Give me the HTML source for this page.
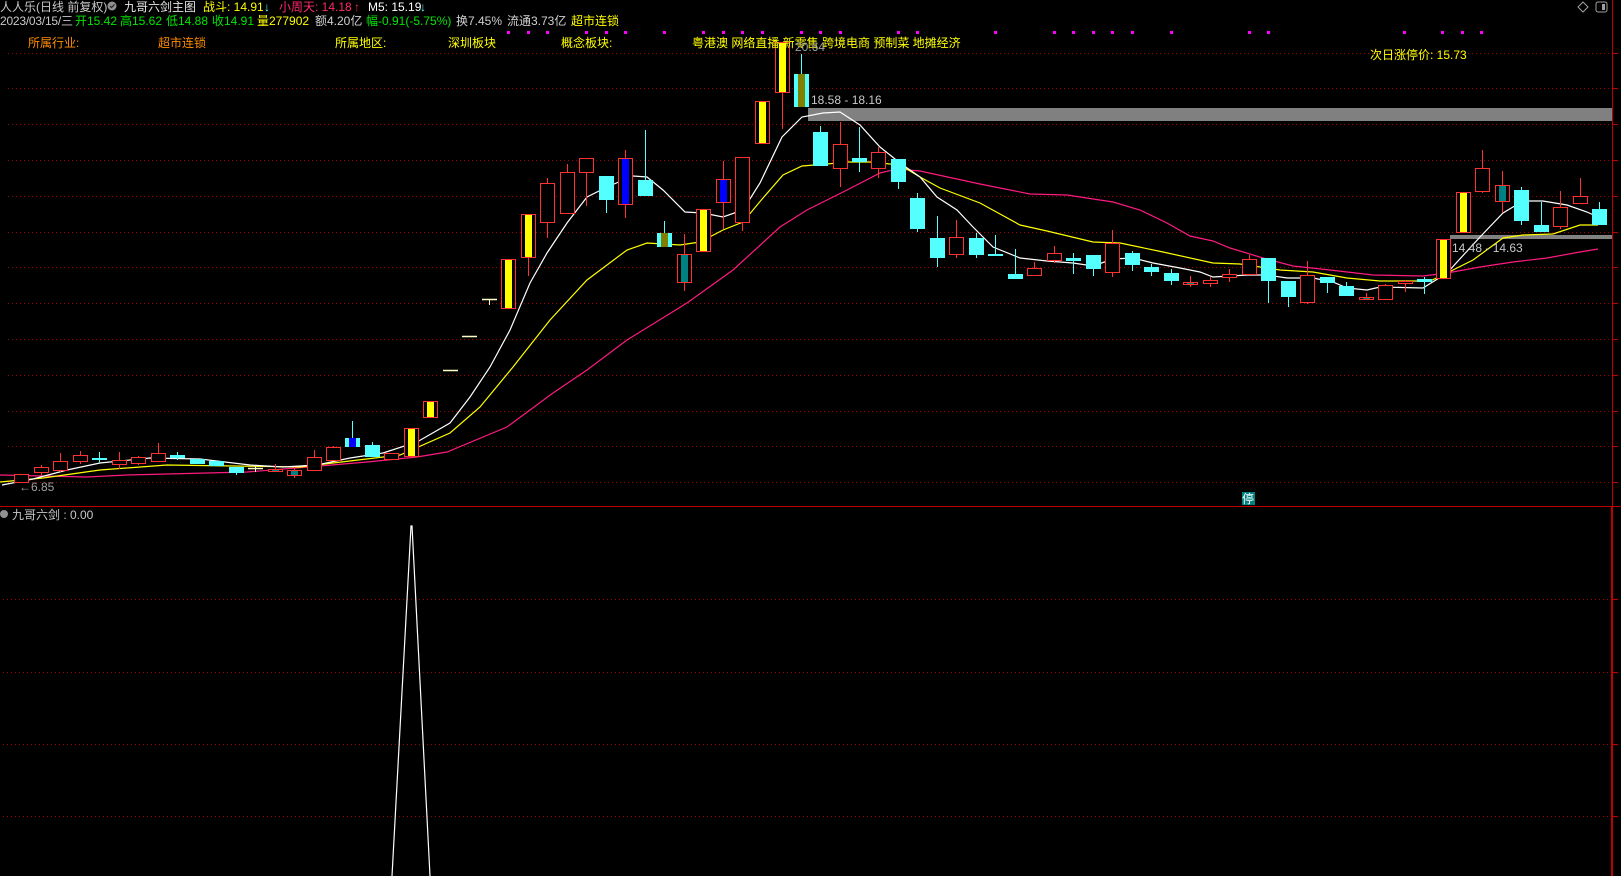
<!DOCTYPE html>
<html><head><meta charset="utf-8">
<style>
html,body{margin:0;padding:0;background:#000;width:1621px;height:876px;overflow:hidden}
svg{display:block}
text{font-family:"Liberation Sans","Noto Sans CJK SC",sans-serif;font-size:12px}
</style></head>
<body>
<svg id="s" width="1621" height="876" xmlns="http://www.w3.org/2000/svg">
<rect width="1621" height="876" fill="#000"/>
<g id="grid"></g>
<text x="0" y="11" fill="#c8c8c8">人人乐(日线 前复权)</text>
<circle cx="112" cy="6" r="4.5" fill="#909090"/>
<path d="M110 6 l1.5 1.5 l3-3" stroke="#222" stroke-width="1.2" fill="none"/>
<text x="124" y="11" fill="#e6e6e6">九哥六剑主图</text>
<text x="203" y="11" fill="#ffff00">战斗: 14.91</text>
<text x="264" y="11" fill="#54ffff">↓</text>
<text x="279" y="11" fill="#ff2a6a">小周天: 14.18</text>
<text x="354" y="11" fill="#ff3232">↑</text>
<text x="368" y="11" fill="#ffffff">M5: 15.19</text>
<text x="420" y="11" fill="#54ffff">↓</text>
<text x="0" y="25" fill="#c8c8c8" textLength="73">2023/03/15/三</text>
<text x="75" y="25" fill="#00e600">开15.42</text>
<text x="120" y="25" fill="#00e600">高15.62</text>
<text x="166" y="25" fill="#00e600">低14.88</text>
<text x="212" y="25" fill="#00e600">收14.91</text>
<text x="257" y="25" fill="#ffff00">量277902</text>
<text x="315" y="25" fill="#d0d0d0">额4.20亿</text>
<text x="366" y="25" fill="#00e600">幅-0.91(-5.75%)</text>
<text x="456" y="25" fill="#d0d0d0">换7.45%</text>
<text x="507" y="25" fill="#d0d0d0">流通3.73亿</text>
<text x="571" y="25" fill="#ffff00">超市连锁</text>
<g id="dots"></g>
<text x="28" y="47" fill="#ff8c00">所属行业:</text>
<text x="158" y="47" fill="#ff8c00">超市连锁</text>
<text x="335" y="47" fill="#ffff00">所属地区:</text>
<text x="448" y="47" fill="#ffff00">深圳板块</text>
<text x="561" y="47" fill="#ffff00">概念板块:</text>
<text x="1370" y="59" fill="#ffff00">次日涨停价: 15.73</text>
<path d="M1583 2 l5 5 l-5 5 l-5 -5 z" stroke="#a0a0a0" fill="none"/>
<rect x="1596" y="2" width="11" height="10" rx="2" stroke="#a0a0a0" fill="none"/>
<rect x="1602" y="4" width="3" height="6" fill="#a0a0a0"/>
<rect x="808" y="108" width="804" height="13" fill="#808080"/>
<rect x="1450" y="235" width="162" height="4" fill="#808080"/>
<g id="ma"></g>
<g id="cand"></g>
<text x="692" y="47" fill="#ffff00">粤港澳 网络直播 新零售 跨境电商 预制菜 地摊经济</text>
<text x="795" y="51" fill="#a0a0a0">20.64</text>
<text x="811" y="104" fill="#c8c8c8">18.58 - 18.16</text>
<text x="1452" y="252" fill="#c8c8c8">14.48 - 14.63</text>
<text x="19" y="491" fill="#a0a0a0">←6.85</text>
<rect x="1242" y="492" width="13" height="13" fill="#008080"/>
<text x="1242" y="503" fill="#fff" style="font-size:12px">停</text>
<line x1="0" y1="506.5" x2="1621" y2="506.5" stroke="#c00000" stroke-width="1"/>
<line x1="1612.5" y1="0" x2="1612.5" y2="506" stroke="#c00000"/>
<line x1="1612" y1="506" x2="1612" y2="876" stroke="#c00000" stroke-width="2"/>
<circle cx="4" cy="514" r="4" fill="#909090"/>
<text x="12" y="519" fill="#c8c8c8">九哥六剑 : 0.00</text>
<polyline points="392,876 411,526 412,526 430,876" stroke="#fff" stroke-width="1.2" fill="none"/>
</svg>
<script>
var NS="http://www.w3.org/2000/svg";
function el(p,t,a){var e=document.createElementNS(NS,t);for(var k in a)e.setAttribute(k,a[k]);p.appendChild(e);return e;}
var g=document.getElementById('grid');
for(var i=0;i<13;i++){var y=Math.round(52.5+i*35.8)+0.5;el(g,'line',{x1:8,y1:y,x2:1610,y2:y,stroke:'#a00000','stroke-dasharray':'1 3'});el(g,'line',{x1:1612,y1:y,x2:1618,y2:y,stroke:'#c00000'});}
[599,672,744,816].forEach(function(y){y+=0.5;el(g,'line',{x1:3,y1:y,x2:1610,y2:y,stroke:'#a00000','stroke-dasharray':'1 3'});el(g,'line',{x1:1612,y1:y,x2:1618,y2:y,stroke:'#c00000'});});
var d=document.getElementById('dots');
[508,528,547,586,606,625,664,703,723,742,762,801,820,840,898,917,995,1054,1073,1093,1112,1132,1171,1249,1268,1404,1442,1462,1481].forEach(function(x){el(d,'rect',{x:x-1,y:31,width:3,height:3,fill:'#ff00ff'});});
var m=document.getElementById('ma');
function pl(pts,c){el(m,'polyline',{points:pts,fill:'none',stroke:c,'stroke-width':1.2});}
pl("0,475 87,477 127,475 207,473 247,472 320,466 367,462 417,457 447,452 507,427 553,393 587,370 627,340 687,303 733,270 780,227 807,210 847,190 880,173 897,169 920,171 980,184 1030,194 1067,195 1113,202 1140,210 1167,223 1190,236 1213,241 1230,248 1263,258 1293,266 1330,270 1373,275 1423,276 1447,273 1480,267 1513,262 1547,258 1580,252 1598,249","#ff1a80");
pl("0,482 43,478 100,470 167,465 233,466 300,467 333,463 400,455 450,433 480,407 513,367 550,320 587,280 627,250 647,243 680,245 700,242 723,230 743,222 763,198 783,175 802,166 827,164 847,162 870,162 900,165 920,177 940,188 980,203 1020,225 1047,231 1093,242 1120,243 1163,252 1213,263 1240,264 1280,270 1313,272 1347,278 1380,281 1430,281 1447,273 1473,260 1503,238 1523,235 1553,234 1580,225 1598,225","#ffff00");
pl("2,485 33,479 67,470 100,463 150,458 200,459 250,465 283,467 317,465 350,458 383,453 417,442 450,423 470,397 490,367 510,330 530,283 547,253 567,223 587,197 607,187 633,176 647,177 663,190 685,212 703,213 723,217 743,210 760,183 782,137 802,117 823,113 840,112 860,125 880,147 900,163 920,177 937,197 957,210 973,227 993,247 1020,258 1047,261 1073,263 1093,266 1113,259 1133,258 1153,263 1180,268 1200,272 1213,277 1247,275 1267,275 1287,278 1313,278 1333,282 1347,288 1367,290 1380,287 1423,288 1447,273 1480,237 1503,213 1523,201 1543,201 1567,205 1587,212 1598,217","#ffffff");
var C=[[21,'R',474,482],[41,'R',467,472,465,476],[60,'R',461,470,453,472],[80,'R',455,461,451,464],[99,'C',458,460,452,463],[119,'R',460,464,452,469],[138,'R',457,463,456,465],[158,'R',453,461,443,461],[177,'C',455,458,452,460],[197,'C',459,464],[216,'C',461,466],[236,'C',467,473,467,475],[255,'W',468,468,465,472],[275,'RT',469,471,464,472],[294,'RT',470,475,467,478],[314,'R',457,470,450,471],[333,'R',447,460,446,460],[352,'CB',438,447,421,447],[372,'C',445,457,442,457],[391,'R',453,459],[411,'Y',428,456],[430,'Y',401,417],[450,'W',370,370],[469,'W',336,336],[489,'W',299,299,299,305],[508,'Y',259,308],[528,'Y',214,257,214,276],[547,'R',183,222,178,238],[567,'R',172,213,164,213],[586,'R',158,172,158,206],[606,'C',176,200,176,213],[625,'RB',158,204,150,218],[645,'C',180,196,130,196],[664,'CO',233,247,221,247],[684,'RT',254,282,234,291],[703,'Y',209,251],[723,'RB',179,202,161,229],[742,'R',157,222,157,231],[762,'Y',101,143],[782,'Y',42,92,42,129],[801,'CO',74,107,54,107],[820,'C',132,166,126,166],[840,'R',144,168,122,187],[859,'C',158,162,127,172],[878,'R',152,168,147,178],[898,'C',159,182,159,189],[917,'C',198,229,193,232],[937,'C',238,258,216,267],[956,'R',237,254,220,258],[976,'C',238,255,233,258],[995,'C',254,256,235,256],[1015,'C',274,279,249,279],[1034,'R',268,275,262,276],[1054,'R',253,260,246,263],[1073,'C',258,261,253,274],[1093,'C',255,269,255,276],[1112,'R',243,272,230,277],[1132,'C',253,265,251,271],[1151,'C',267,272,264,276],[1171,'C',273,281,269,285],[1190,'RT',282,284,276,287],[1210,'R',280,283,277,287],[1229,'R',274,277,269,282],[1249,'R',259,274,255,274],[1268,'C',258,281,258,303],[1288,'C',281,297,281,307],[1307,'R',275,302,261,304],[1327,'C',277,283,277,293],[1346,'C',286,296,282,296],[1366,'RT',297,299,293,299],[1385,'R',285,299,284,299],[1405,'R',281,283,280,292],[1424,'C',279,282,277,294],[1443,'Y',239,278],[1463,'Y',192,232],[1482,'R',168,191,150,193],[1502,'RT',185,201,171,213],[1521,'C',190,221,187,225],[1541,'C',225,232,202,232],[1560,'R',207,226,191,229],[1580,'R',196,203,178,203],[1599,'C',209,225,202,225]];
var cg=document.getElementById('cand');
var RED='#ff3232',CY='#54ffff';
C.forEach(function(c){var x=c[0],t=c[1],top=c[2],bot=c[3],wt=c[4]===undefined?top:c[4],wb=c[5]===undefined?bot:c[5];
 var red=(t=='R'||t=='Y'||t=='RB'||t=='RT');var col=red?RED:(t=='W'?'#ffffc8':CY);
 if(wt<top)el(cg,'line',{x1:x+.5,y1:wt,x2:x+.5,y2:top,stroke:col});
 if(wb>bot)el(cg,'line',{x1:x+.5,y1:bot,x2:x+.5,y2:wb,stroke:col});
 if(t=='W'){el(cg,'line',{x1:x-7,y1:top+.5,x2:x+8,y2:top+.5,stroke:col,'stroke-width':1.5});return;}
 var h=Math.max(bot-top,2);
 if(red){el(cg,'rect',{x:x-6.5,y:top+.5,width:14,height:h,fill:'#000',stroke:RED});
   var inn=t=='Y'?'#ffff00':t=='RB'?'#0000ff':t=='RT'?'#008080':null;
   if(inn)el(cg,'rect',{x:x-3,y:top+1,width:7,height:h-1,fill:inn});}
 else{el(cg,'rect',{x:x-7,y:top,width:15,height:h,fill:CY});
   if(t=='CO')el(cg,'rect',{x:x-3,y:top,width:7,height:h,fill:'#808000'});
   if(t=='CB')el(cg,'rect',{x:x-3,y:top,width:7,height:h,fill:'#0000ff'});}
});
</script>
</body></html>
